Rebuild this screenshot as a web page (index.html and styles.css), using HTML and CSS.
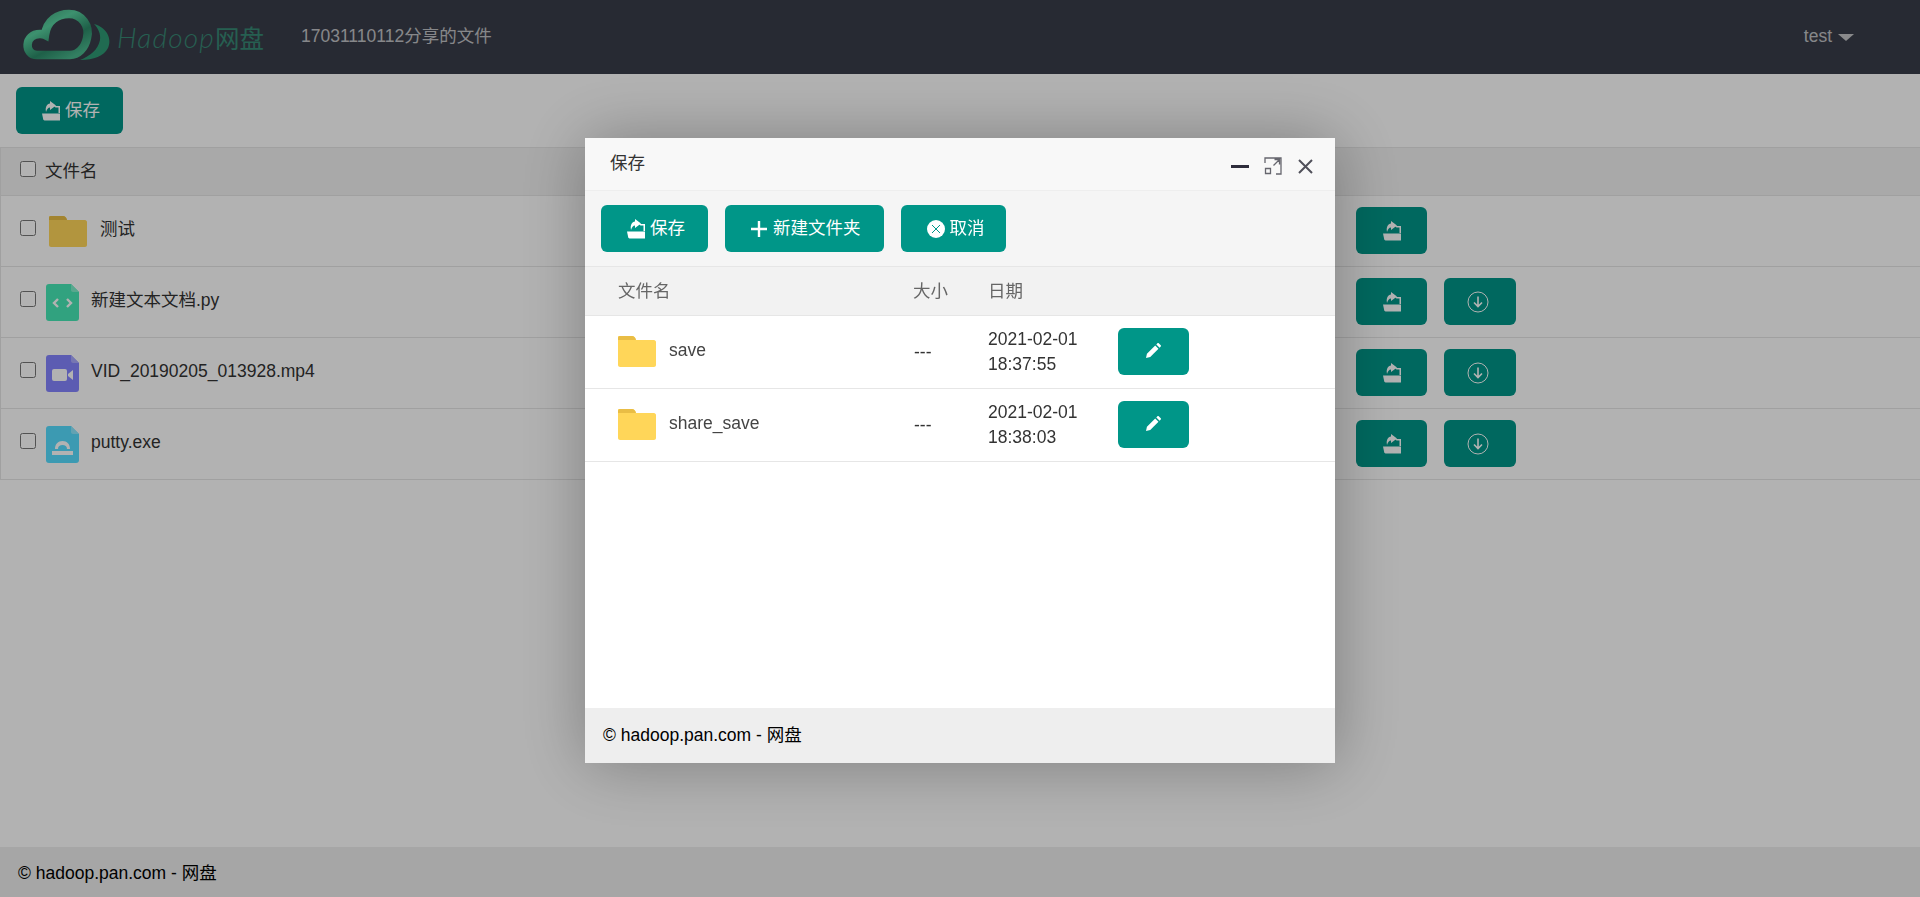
FILE: index.html
```html
<!DOCTYPE html>
<html lang="zh-CN">
<head>
    <meta charset="UTF-8">
    <meta name="viewport" content="width=device-width, initial-scale=1.0">
    <title>Hadoop网盘</title>
    <link rel="stylesheet" href="styles.css">
</head>
<body>
    <svg class="icon-defs" width="0" height="0">
        <symbol id="icon-save" viewBox="0 0 18 20">
            <path d="M8 0L14 4.500 8 9V6.500C6 6.500 5 8 4 11 3 6 5 3 8 2.600Z"/>
            <path d="M12 5H18V12H16.500V6.500H13.500Z"/>
            <path d="M0 12.500H18V19.500H2.500C1.800 19.500 1.400 19 1.200 18.300Z"/>
        </symbol>
        <symbol id="icon-down" viewBox="0 0 22 22">
            <circle cx="11" cy="11" r="10" fill="none" stroke="currentColor" stroke-width="1"/>
            <path d="M11 5.500V15.500M7 11.500L11 15.500 15 11.500" fill="none" stroke="currentColor" stroke-width="1.600"/>
        </symbol>
        <symbol id="icon-folder" viewBox="0 0 38 31">
            <path d="M1 0H14C16 0 17 1 18 4H36C37 4 38 5 38 6V29C38 30 37 31 36 31H2C1 31 0 30 0 29V1C0 .5.5 0 1 0Z" fill="#ffd659"/>
            <path d="M2 0H14C16 0 17 1 18 4H0V2C0 1 1 0 2 0Z" fill="#e9bd45"/>
        </symbol>
    </svg>

    <header class="top-bar">
        <div class="logo">
            <svg class="logo-cloud" width="88" height="54" viewBox="0 0 88 54">
                <defs>
                    <linearGradient id="cloudGrad" x1="0" y1="0" x2=".8" y2="1">
                        <stop offset="0" stop-color="#3f9c78"/>
                        <stop offset=".35" stop-color="#58d09f"/>
                        <stop offset=".7" stop-color="#2c8a68"/>
                        <stop offset="1" stop-color="#49b68c"/>
                    </linearGradient>
                </defs>
                <path d="M14 45C1 45 1 24 17 24 18 24 20 24 22 25 24 10 35 4 46 4 59 4 67 16 64 28 62 38 55 45 47 45Z" fill="none" stroke="url(#cloudGrad)" stroke-width="8.500"/>
                <path d="M71 14C85 18 89 30 85 38 81 46 71 50 57 50 67 46 75 40 77 30 78 24 75 18 71 14Z" fill="#2f9a74"/>
            </svg>
            <span class="logo-text">Hadoop<span class="logo-cn">网盘</span></span>
        </div>
        <span class="share-title">17031110112分享的文件</span>
        <span class="user-menu">test<i class="caret"></i></span>
    </header>

    <main class="content">
        <div class="toolbar">
            <button class="btn"><svg class="icon-s"><use href="#icon-save"/></svg>保存</button>
        </div>
        <table class="file-table">
            <colgroup><col><col class="col-actions"></colgroup>
            <thead>
                <tr><th colspan="2"><label class="name-cell cn-line"><input type="checkbox">文件名</label></th></tr>
            </thead>
            <tbody>
                <tr>
                    <td>
                        <div class="name-cell">
                            <input type="checkbox">
                            <svg class="folder-big"><use href="#icon-folder"/></svg>
                            <span class="cn-text">测试</span>
                        </div>
                    </td>
                    <td class="actions">
                        <button class="btn btn-icon"><svg class="icon-s"><use href="#icon-save"/></svg></button>
                    </td>
                </tr>
                <tr>
                    <td>
                        <div class="name-cell">
                            <input type="checkbox">
                            <svg class="file-icon" viewBox="0 0 33 37">
                                <path d="M3 0H25L33 8V34C33 36 32 37 30 37H3C1 37 0 36 0 34V3C0 1 1 0 3 0Z" fill="#47e9b6"/>
                                <path d="M25 0L33 8H27C26 8 25 7 25 6Z" fill="#7ff0cc"/>
                                <path d="M12 15L8 19 12 23M21 15L25 19 21 23" fill="none" stroke="#fff" stroke-width="2.400"/>
                            </svg>
                            <span class="cn-text">新建文本文档.py</span>
                        </div>
                    </td>
                    <td class="actions">
                        <button class="btn btn-icon"><svg class="icon-s"><use href="#icon-save"/></svg></button>
                        <button class="btn btn-icon btn-wide"><svg class="icon-d"><use href="#icon-down"/></svg></button>
                    </td>
                </tr>
                <tr>
                    <td>
                        <div class="name-cell">
                            <input type="checkbox">
                            <svg class="file-icon" viewBox="0 0 33 37">
                                <path d="M3 0H25L33 8V34C33 36 32 37 30 37H3C1 37 0 36 0 34V3C0 1 1 0 3 0Z" fill="#8585ff"/>
                                <path d="M25 0L33 8H27C26 8 25 7 25 6Z" fill="#a9a9ff"/>
                                <rect x="6" y="14" width="15" height="12" rx="2" fill="#fff"/>
                                <path d="M22 19L27 15V25L22 21Z" fill="#fff"/>
                            </svg>
                            <span class="latin-text">VID_20190205_013928.mp4</span>
                        </div>
                    </td>
                    <td class="actions">
                        <button class="btn btn-icon"><svg class="icon-s"><use href="#icon-save"/></svg></button>
                        <button class="btn btn-icon btn-wide"><svg class="icon-d"><use href="#icon-down"/></svg></button>
                    </td>
                </tr>
                <tr>
                    <td>
                        <div class="name-cell">
                            <input type="checkbox">
                            <svg class="file-icon" viewBox="0 0 33 37">
                                <path d="M3 0H25L33 8V34C33 36 32 37 30 37H3C1 37 0 36 0 34V3C0 1 1 0 3 0Z" fill="#56ddff"/>
                                <path d="M25 0L33 8H27C26 8 25 7 25 6Z" fill="#8ee8ff"/>
                                <path d="M9 23C9 18 12 15 16.500 15S24 18 24 23H21C21 20 19 19 16.500 19S12 20 12 23Z" fill="#fff"/>
                                <path d="M6 25H27V29H6Z" fill="#fff"/>
                            </svg>
                            <span class="latin-text">putty.exe</span>
                        </div>
                    </td>
                    <td class="actions">
                        <button class="btn btn-icon"><svg class="icon-s"><use href="#icon-save"/></svg></button>
                        <button class="btn btn-icon btn-wide"><svg class="icon-d"><use href="#icon-down"/></svg></button>
                    </td>
                </tr>
            </tbody>
        </table>
    </main>

    <footer class="page-footer">© hadoop.pan.com - 网盘</footer>

    <div class="shade"></div>

    <div class="dialog">
        <div class="dialog-title">
            <span>保存</span>
            <div class="dialog-controls">
                <i class="ctl-min"></i>
                <svg class="ctl-max" width="18" height="18" viewBox="0 0 18 18" fill="none" stroke="#66666e" stroke-width="1.300">
                    <path d="M1 6V1H17V17H12M1.500 11.500V16.500H6.500V11.500ZM9.500 8.500L15.500 2.500M10.500 2.500H15.500V7.500"/>
                </svg>
                <svg width="15" height="15" viewBox="0 0 15 15" fill="none" stroke="#50505a" stroke-width="2">
                    <path d="M1 1L14 14M14 1L1 14"/>
                </svg>
            </div>
        </div>
        <div class="dialog-toolbar">
            <button class="btn"><svg class="icon-s"><use href="#icon-save"/></svg>保存</button>
            <button class="btn">
                <svg class="icon-plus" viewBox="0 0 16 16"><path d="M6.800 0H9.200V6.800H16V9.200H9.200V16H6.800V9.200H0V6.800H6.800Z"/></svg>新建文件夹
            </button>
            <button class="btn btn-cancel">
                <svg class="icon-x" viewBox="0 0 18 18"><circle cx="9" cy="9" r="9" fill="#fff"/><path d="M5 5L13 13M13 5L5 13" stroke="#009688" stroke-width="1"/></svg>取消
            </button>
        </div>
        <div class="dialog-body">
            <table class="pick-table">
                <colgroup><col class="pick-name"><col class="pick-size"><col class="pick-date"><col></colgroup>
                <thead>
                    <tr><th>文件名</th><th>大小</th><th>日期</th><th></th></tr>
                </thead>
                <tbody>
                    <tr>
                        <td><div class="pick-folder"><svg class="folder-big"><use href="#icon-folder"/></svg><span>save</span></div></td>
                        <td><span class="no-size">---</span></td>
                        <td>2021-02-01 18:37:55</td>
                        <td><button class="btn btn-icon"><svg class="icon-pen" viewBox="0 0 16 16"><path d="M0 16L1 11.500 9.800 2.700 13.300 6.200 4.500 15ZM11 1.500L12.200.3C12.600-.1 13.200-.1 13.600.3L15.700 2.400C16.100 2.800 16.100 3.400 15.700 3.800L14.500 5Z"/></svg></button></td>
                    </tr>
                    <tr>
                        <td><div class="pick-folder"><svg class="folder-big"><use href="#icon-folder"/></svg><span>share_save</span></div></td>
                        <td><span class="no-size">---</span></td>
                        <td>2021-02-01 18:38:03</td>
                        <td><button class="btn btn-icon"><svg class="icon-pen" viewBox="0 0 16 16"><path d="M0 16L1 11.500 9.800 2.700 13.300 6.200 4.500 15ZM11 1.500L12.200.3C12.600-.1 13.200-.1 13.600.3L15.700 2.400C16.100 2.800 16.100 3.400 15.700 3.800L14.500 5Z"/></svg></button></td>
                    </tr>
                </tbody>
            </table>
        </div>
        <div class="dialog-footer">© hadoop.pan.com - 网盘</div>
    </div>
</body>
</html>
```

FILE: styles.css
```css
* {
    box-sizing: border-box;
}

body {
    margin: 0;
    height: 100vh;
    display: flex;
    flex-direction: column;
    background-color: #fff;
    color: #333;
    font-family: "Liberation Sans", "Noto Sans CJK SC", sans-serif;
    font-size: 17.5px;
}

.icon-defs {
    position: absolute;
}

/* top bar */
.top-bar {
    height: 74px;
    flex-shrink: 0;
    display: flex;
    align-items: center;
    padding: 0 0 0 23px;
    background-color: #393d49;
    color: rgba(255, 255, 255, 0.7);
}

.logo {
    display: flex;
    align-items: center;
    width: 278px;
}

.logo-cloud {
    overflow: visible;
}

.logo-text {
    margin-left: 6px;
    font-family: Lato, "Noto Sans CJK SC", sans-serif;
    font-style: italic;
    font-weight: 300;
    font-size: 28px;
    letter-spacing: 1.200px;
    color: #378875;
    white-space: nowrap;
}

.logo-cn {
    font-style: normal;
    font-weight: 400;
    font-size: 24.500px;
    letter-spacing: 0;
}

.share-title {
    flex-grow: 1;
    padding-bottom: 5px;
}

.user-menu {
    display: flex;
    align-items: center;
    margin-right: 66px;
    padding-bottom: 2px;
}

.caret {
    width: 0;
    height: 0;
    margin-left: 6px;
    margin-top: 3px;
    border-left: 8px solid transparent;
    border-right: 8px solid transparent;
    border-top: 7px solid rgba(255, 255, 255, 0.7);
}

/* buttons */
.btn {
    display: inline-flex;
    align-items: center;
    justify-content: center;
    height: 47px;
    padding: 0 23px 4px 26px;
    border: none;
    border-radius: 6px;
    background-color: #009688;
    color: #fff;
    fill: #fff;
    font-family: inherit;
    font-size: 17.5px;
    white-space: nowrap;
}

.btn svg {
    margin-top: 4px;
}

.btn-cancel {
    padding-right: 21px;
}

.btn-icon {
    width: 71px;
    padding: 0;
    vertical-align: top;
}

.btn-icon svg {
    margin-top: 0;
}

.btn-wide {
    width: 72px;
    margin-left: 12px;
}

.icon-s {
    width: 18px;
    height: 20px;
    margin-right: 5px;
}

.btn-icon .icon-s {
    margin-right: 0;
}

.icon-d {
    width: 22px;
    height: 22px;
    margin-right: 3px;
}

.icon-plus {
    width: 16px;
    height: 16px;
    margin-right: 6px;
}

.icon-x {
    width: 18px;
    height: 18px;
    margin-right: 5px;
}

.btn-icon .icon-pen {
    width: 15px;
    height: 15px;
    margin-bottom: 2px;
}

/* main file list */
.content {
    flex-grow: 1;
}

.toolbar {
    padding: 13px 16px 13px;
}

.file-table {
    width: 100%;
    border-collapse: collapse;
    table-layout: fixed;
    border: 1px solid #e6e6e6;
    border-right: none;
}

.col-actions {
    width: 564px;
}

.file-table th {
    height: 48px;
    padding: 0 0 0 19px;
    background-color: #f2f2f2;
    border-bottom: 1px solid #e6e6e6;
    text-align: left;
    font-weight: normal;
}

.file-table td {
    height: 71px;
    padding: 0 0 0 19px;
    border-bottom: 1px solid #e6e6e6;
}

.file-table .actions {
    padding: 0 0 1px;
}

.name-cell {
    display: flex;
    align-items: center;
}

.name-cell input {
    width: 16px;
    height: 16px;
    margin: -7px 10px 0 0;
}

.cn-line {
    padding-bottom: 5px;
}

.cn-line input {
    margin: 0 9px 0 0;
}

.cn-text {
    padding-bottom: 8px;
}

.latin-text {
    padding-bottom: 3px;
}

.folder-big {
    width: 38px;
    height: 31px;
    flex-shrink: 0;
}

.name-cell .folder-big {
    margin: 0 13px 0 3px;
}

.file-icon {
    width: 33px;
    height: 37px;
    margin-right: 12px;
}

/* dialog */
.shade {
    position: fixed;
    top: 0;
    left: 0;
    width: 100%;
    height: 100%;
    background-color: rgba(0, 0, 0, 0.3);
}

.dialog {
    position: fixed;
    top: 138px;
    left: 585px;
    width: 750px;
    height: 625px;
    display: flex;
    flex-direction: column;
    background-color: #fff;
    box-shadow: 1px 1px 62px rgba(0, 0, 0, 0.3);
}

.dialog-title {
    height: 53px;
    flex-shrink: 0;
    display: flex;
    align-items: center;
    justify-content: space-between;
    padding: 0 22px 5px 25px;
    background-color: #f8f8f8;
    border-bottom: 1px solid #eee;
}

.dialog-controls {
    display: flex;
    align-items: center;
    gap: 15px;
    margin-top: 9px;
}

.ctl-min {
    width: 18px;
    height: 3px;
    background-color: #2e2d3c;
}

.ctl-max {
    margin-right: 1px;
}

.dialog-toolbar {
    height: 76px;
    flex-shrink: 0;
    display: flex;
    align-items: center;
    gap: 17px;
    padding: 0 16px;
    background-color: #f5f5f5;
    border-bottom: 1px solid #e6e6e6;
}

.dialog-body {
    flex-grow: 1;
}

.pick-table {
    width: 100%;
    border-collapse: collapse;
    table-layout: fixed;
}

.pick-name {
    width: 310px;
}

.pick-size {
    width: 75px;
}

.pick-date {
    width: 129px;
}

.pick-table th {
    height: 48px;
    padding: 0 0 3px 18px;
    background-color: #f2f2f2;
    border-bottom: 1px solid #e6e6e6;
    color: #666;
    text-align: left;
    font-weight: normal;
}

.pick-table th:first-child,
.pick-table td:first-child {
    padding-left: 33px;
}

.pick-table td {
    height: 73px;
    padding: 0 0 0 18px;
    border-bottom: 1px solid #e6e6e6;
    line-height: 25px;
}

.pick-table td:last-child {
    padding-left: 19px;
}

.pick-folder {
    display: flex;
    align-items: center;
    gap: 13px;
    color: #444;
}

.pick-folder span {
    padding-bottom: 3px;
}

.no-size {
    position: relative;
    top: 1px;
    left: 1px;
}

.dialog-footer {
    height: 55px;
    flex-shrink: 0;
    display: flex;
    align-items: center;
    padding: 0 0 5px 18px;
    background-color: #eee;
    color: #000;
}

/* page footer */
.page-footer {
    height: 50px;
    flex-shrink: 0;
    display: flex;
    align-items: center;
    padding: 0 0 2px 18px;
    background-color: #eee;
    color: #000;
}
```
